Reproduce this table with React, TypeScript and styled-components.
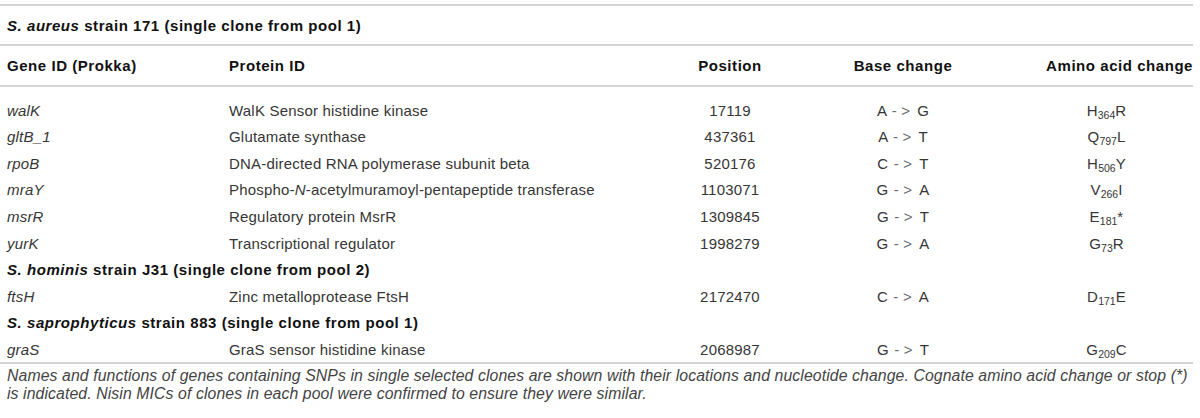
import React from "react";
import styled, { createGlobalStyle } from "styled-components";

const Global = createGlobalStyle`
  html, body { margin: 0; padding: 0; background: #fff; }
  body { font-family: "Liberation Sans", Arial, Helvetica, sans-serif; color: #333; }
`;

const Table = styled.div`
  width: 1193px;
  margin-top: 4px;
  border-top: 2px solid #d4d4d4;
`;

const SectionTitle = styled.div<{ $first?: boolean }>`
  height: ${(p) => (p.$first ? "38px" : "26.56px")};
  display: flex;
  align-items: center;
  padding-left: 7px;
  font-size: 15px;
  font-weight: bold;
  letter-spacing: 0.55px;
  color: #111;
  border-bottom: ${(p) => (p.$first ? "2px solid #d4d4d4" : "none")};
  em { font-style: italic; }
`;

const columns = "229px 421px 160px 186px 1fr";

const HeaderRow = styled.div`
  display: grid;
  grid-template-columns: ${columns};
  height: 39px;
  align-items: center;
  border-bottom: 2px solid #d4d4d4;
  font-size: 15px;
  font-weight: bold;
  letter-spacing: 0.55px;
  color: #111;
`;

const Body = styled.div`
  padding-top: 10px;
  border-bottom: 2px solid #d4d4d4;
`;

const Row = styled.div`
  display: grid;
  grid-template-columns: ${columns};
  height: 26.56px;
  align-items: center;
  font-size: 15px;
  letter-spacing: 0.2px;
  color: #363636;
`;

const Cell = styled.div<{ $align?: "left" | "center" | "right"; $pad?: number; $italic?: boolean }>`
  text-align: ${(p) => p.$align ?? "left"};
  padding-left: ${(p) => p.$pad ?? 0}px;
  font-style: ${(p) => (p.$italic ? "italic" : "normal")};
  white-space: pre;
  em { font-style: italic; }
`;

const Arrow = styled.span`
  color: #6a6a6a;
  margin: 0 7px 0 1px;
`;

const Sub = styled.sub`
  font-size: 10.5px;
  vertical-align: -3px;
  line-height: 0;
  letter-spacing: 0;
`;

const Caption = styled.p`
  margin: 3px 0 0;
  padding-left: 7px;
  white-space: nowrap;
  font-size: 15.8px;
  line-height: 18px;
  font-style: italic;
  letter-spacing: 0.1px;
  color: #444;
`;

type Data = {
  gene: string;
  protein: React.ReactNode;
  pos: string;
  from: string;
  to: string;
  aa: [string, string, string];
};

const rows1: Data[] = [
  { gene: "walK", protein: "WalK Sensor histidine kinase", pos: "17119", from: "A", to: "G", aa: ["H", "364", "R"] },
  { gene: "gltB_1", protein: "Glutamate synthase", pos: "437361", from: "A", to: "T", aa: ["Q", "797", "L"] },
  { gene: "rpoB", protein: "DNA-directed RNA polymerase subunit beta", pos: "520176", from: "C", to: "T", aa: ["H", "506", "Y"] },
  {
    gene: "mraY",
    protein: (
      <>
        Phospho-<em>N</em>-acetylmuramoyl-pentapeptide transferase
      </>
    ),
    pos: "1103071",
    from: "G",
    to: "A",
    aa: ["V", "266", "I"],
  },
  { gene: "msrR", protein: "Regulatory protein MsrR", pos: "1309845", from: "G", to: "T", aa: ["E", "181", "*"] },
  { gene: "yurK", protein: "Transcriptional regulator", pos: "1998279", from: "G", to: "A", aa: ["G", "73", "R"] },
];

const rows2: Data[] = [
  { gene: "ftsH", protein: "Zinc metalloprotease FtsH", pos: "2172470", from: "C", to: "A", aa: ["D", "171", "E"] },
];

const rows3: Data[] = [
  { gene: "graS", protein: "GraS sensor histidine kinase", pos: "2068987", from: "G", to: "T", aa: ["G", "209", "C"] },
];

const DataRow = ({ d }: { d: Data }) => (
  <Row>
    <Cell $pad={7} $italic>
      {d.gene}
    </Cell>
    <Cell>{d.protein}</Cell>
    <Cell $align="center">{d.pos}</Cell>
    <Cell $align="center">
      {d.from} <Arrow>- &gt;</Arrow>
      {d.to}
    </Cell>
    <Cell $align="center" $pad={24}>
      {d.aa[0]}
      <Sub>{d.aa[1]}</Sub>
      {d.aa[2]}
    </Cell>
  </Row>
);

export default function App() {
  return (
    <>
      <Global />
      <Table>
        <SectionTitle $first>
          <span>
            <em>S. aureus</em> strain 171 (single clone from pool 1)
          </span>
        </SectionTitle>
        <HeaderRow>
          <Cell $pad={7}>Gene ID (Prokka)</Cell>
          <Cell>Protein ID</Cell>
          <Cell $align="center">Position</Cell>
          <Cell $align="center">Base change</Cell>
          <Cell $align="right">Amino acid change</Cell>
        </HeaderRow>
        <Body>
          {rows1.map((d) => (
            <DataRow key={d.gene} d={d} />
          ))}
          <SectionTitle>
            <span>
              <em>S. hominis</em> strain J31 (single clone from pool 2)
            </span>
          </SectionTitle>
          {rows2.map((d) => (
            <DataRow key={d.gene} d={d} />
          ))}
          <SectionTitle>
            <span>
              <em>S. saprophyticus</em> strain 883 (single clone from pool 1)
            </span>
          </SectionTitle>
          {rows3.map((d) => (
            <DataRow key={d.gene} d={d} />
          ))}
        </Body>
        <Caption>
          Names and functions of genes containing SNPs in single selected clones are shown with their locations and
          nucleotide change. Cognate amino acid change or stop (*)
          <br />
          is indicated. Nisin MICs of clones in each pool were confirmed to ensure they were similar.
        </Caption>
      </Table>
    </>
  );
}
